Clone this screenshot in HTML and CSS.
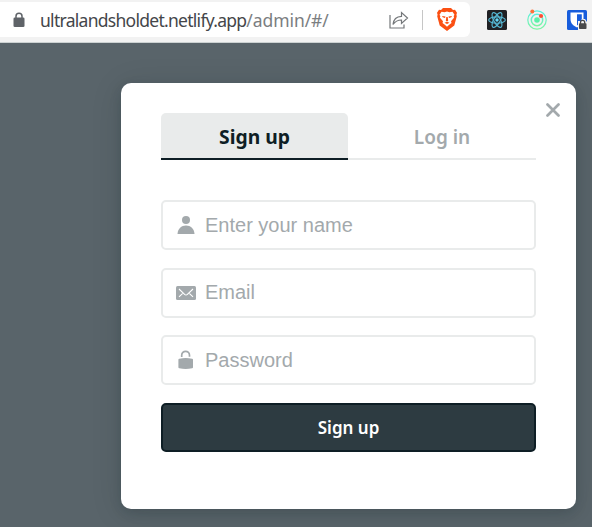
FILE: index.html
```html
<!DOCTYPE html>
<html lang="en">
<head>
<meta charset="utf-8">
<title>Sign up</title>
<link rel="stylesheet" href="styles.css">
</head>
<body>
<header class="toolbar">
  <div class="address">
    <svg class="lock" width="12" height="16" viewBox="0 0 12 16"><path d="M3 7V4.200a3 3 0 0 1 6 0V7" fill="none" stroke="#5f6368" stroke-width="1.500"/><rect x=".5" y="5.500" width="11" height="9.500" rx="1.300" fill="#5f6368"/></svg>
    <div class="url"><span class="host">ultralandsholdet.netlify.app</span><span class="path">/admin/#/</span></div>
    <svg class="share" width="20" height="18" viewBox="0 0 20 18" fill="none" stroke="#74777a" stroke-width="1.200"><path d="M1 4v13h14v-3.500M4 13.500C4.500 8.500 7.500 5.500 12.500 5.300V1.500l6 5.500-6 5.500V9C9 9 6 10.500 4 13.500Z"/></svg>
    <span class="divider"></span>
    <svg class="brave" width="20" height="23" viewBox="0 0 20 23"><path fill="#fb5013" d="M6 0h8l2 2 2-.2 2 3-.6 2 .4 1.400-2.500 9.300L10 23l-7.300-5.500L.2 8.200l.4-1.400-.6-2 2-3L4 2Z"/><path fill="#fff" d="m4.500 3.800 3 .5 2.500-.8 2.500.8 3-.5 2 3-.8 1.200.3 1.700-3 3.600.5 1.700-2 1.500L10 18.700l-2.500-2.200-2-1.500.5-1.700-3-3.600.3-1.700-.8-1.200Z"/><path d="m5 8 3.500.5-.5 1.500-2.300-.8Zm10 0-3.500.5.500 1.500 2.300-.8ZM9.300 9h1.400l.5 3.700L10 13.500l-1.200-.8Zm-1.800 5.700 2.500-.9 2.500.9L10 16Z" fill="#fb5013"/></svg>
  </div>
  <div class="extensions">
    <svg width="20" height="20" viewBox="0 0 20 20"><rect width="20" height="20" rx="1.500" fill="#202124"/><g fill="none" stroke="#56b9d5" stroke-width="1.150"><ellipse cx="10" cy="10" rx="8.300" ry="3.200"/><ellipse cx="10" cy="10" rx="8.300" ry="3.200" transform="rotate(60 10 10)"/><ellipse cx="10" cy="10" rx="8.300" ry="3.200" transform="rotate(120 10 10)"/></g><circle cx="10" cy="10" r="1.700" fill="#61dafb"/></svg>
    <svg class="orbit" width="20" height="21" viewBox="0 0 20 21"><defs><linearGradient id="mint" x2="0" y2="1"><stop stop-color="#58eee0"/><stop offset="1" stop-color="#7df5a3"/></linearGradient></defs><g fill="none" stroke="url(#mint)" stroke-width="1.200"><circle cx="10" cy="11" r="9.200"/><circle cx="10" cy="11" r="5.700" stroke-width="1.500"/></g><circle cx="10" cy="11" r="2.800" fill="#5df0a9"/><circle cx="5.300" cy="2.500" r="2" fill="#ff7139"/><circle cx="14" cy="7" r="2.100" fill="#ff4d33"/></svg>
    <svg class="shield" width="21" height="20" viewBox="0 0 21 20"><rect width="20" height="20" rx="1.500" fill="#175ddc"/><path d="M3.500 2.500h13V9c0 4.500-2.800 6.800-6.500 8.500C6.300 15.800 3.500 13.500 3.500 9Z" fill="#fff"/><path d="M10 4.300h4.800V9c0 3-2 5-4.800 6.600Z" fill="#175ddc"/><path d="M11 11h3l1-2h3l2 3h1v8H11Z" fill="#f3f3f3"/><path d="M13.500 14v-1.600a2.100 2.100 0 0 1 4.200 0V14" fill="none" stroke="#49494b" stroke-width="1.300"/><rect x="12" y="13.300" width="7.500" height="5.700" rx=".8" fill="#49494b"/></svg>
  </div>
</header>
<main class="page">
  <section class="modal">
    <button class="close" aria-label="Close"><svg width="14" height="14" viewBox="0 0 14 14"><path d="m1.500 1.500 11 11M12.500 1.500l-11 11" stroke="#a3a9ac" stroke-width="2.700" stroke-linecap="round"/></svg></button>
    <nav class="tabs"><button class="tab active"><span>Sign up</span></button><button class="tab"><span>Log in</span></button></nav>
    <form class="form">
      <label class="field"><svg width="20" height="20" viewBox="0 0 20 20" fill="#a3a9ac"><circle cx="10" cy="5" r="4"/><path d="M1.500 19c.4-5.500 3.800-8.500 8.500-8.500s8.100 3 8.500 8.500Z"/></svg><input type="text" placeholder="Enter your name"></label>
      <label class="field"><svg width="20" height="20" viewBox="0 0 20 20"><rect y="3" width="20" height="14" rx="1.500" fill="#a3a9ac"/><path d="m3 6 5.600 5.400c.8.800 2 .8 2.800 0L17 6M3 13.800l4-3.700M17 13.800l-4-3.700" fill="none" stroke="#fff" stroke-width="1.100"/></svg><input type="email" placeholder="Email"></label>
      <label class="field"><svg width="20" height="20" viewBox="0 0 20 20"><path d="M5.700 7V5.200a3.900 3.900 0 0 1 7.800 0v1.500" fill="none" stroke="#a3a9ac" stroke-width="1.700"/><path d="M3.300 8.700q6.300-1.200 12.800 0 .9.200.9 1v7.500q0 .9-.9 1.100-6.500 1.200-12.800 0-.9-.2-.9-1.100V9.700q0-.8.900-1Z" fill="#a3a9ac"/></svg><input type="password" placeholder="Password"></label>
      <button class="submit" type="button"><span>Sign up</span></button>
    </form>
  </section>
</main>
</body>
</html>
```
FILE: styles.css
```css
* { box-sizing: border-box; }
body { margin: 0; height: 527px; overflow: hidden; display: flex; flex-direction: column; background: #59646a; font-family: "Noto Sans", sans-serif; }
button { padding: 0; border: 0; background: none; font: inherit; }
svg { display: block; flex: none; }
.toolbar { height: 43px; flex: none; display: flex; padding-top: 2px; background: #f2f2f2; border-bottom: 1px solid #ccd2d2; }
.address { width: 470px; height: 35px; display: flex; align-items: center; padding-left: 13px; background: #fff; border-radius: 0 6px 6px 0; }
.url { width: 336px; margin-left: 15px; font-size: 17.5px; line-height: 30px; white-space: nowrap; }
.host { color: #44464a; letter-spacing: -.72px; }
.path { color: #7b7e81; letter-spacing: -.08px; }
.share { margin-left: 13px; }
.divider { width: 1px; height: 20px; margin-left: 13px; background: #c6c6c6; }
.brave { margin-left: 14px; }
.extensions { display: flex; align-items: center; height: 35px; gap: 20px; margin-left: 17px; }
.page { flex: 1; padding: 40px 0 0 121px; }
.modal { position: relative; width: 455px; height: 426px; padding: 30px 40px; background: #fff; border-radius: 10px; box-shadow: 0 4px 12px rgba(14,30,37,.16), 0 4px 32px rgba(14,30,37,.12); }
.close { position: absolute; top: 20px; right: 16px; }
.tabs { display: flex; height: 47px; }
.tab { flex: 1; padding-top: 3px; color: #a3a9ac; border-bottom: 2px solid #e9ebeb; font-size: 19px; font-weight: 600; line-height: 42px; }
.tab.active { flex: 0 0 187px; color: #0e1e25; font-size: 19.3px; font-weight: 700; background: #e9ebeb; border-color: #0e1e25; border-radius: 5px 5px 0 0; box-shadow: inset 0 -1px #e9ebeb; }
.form { display: flex; flex-direction: column; gap: 17.5px; margin-top: 40px; }
.field { display: flex; align-items: center; height: 50px; padding-left: 13px; border: 2px solid #e9ebeb; border-radius: 5px; }
.field input { flex: 1; min-width: 0; margin-left: 9px; padding: 0; border: 0; outline: 0; font: 20px "Liberation Sans", sans-serif; }
.field input::placeholder { color: #a3a9ac; opacity: 1; }
.submit { height: 49px; color: #fff; background: #2d3b41; border: 2px solid #0e1e25; border-radius: 5px; font-size: 17px; font-weight: 600; }
```
